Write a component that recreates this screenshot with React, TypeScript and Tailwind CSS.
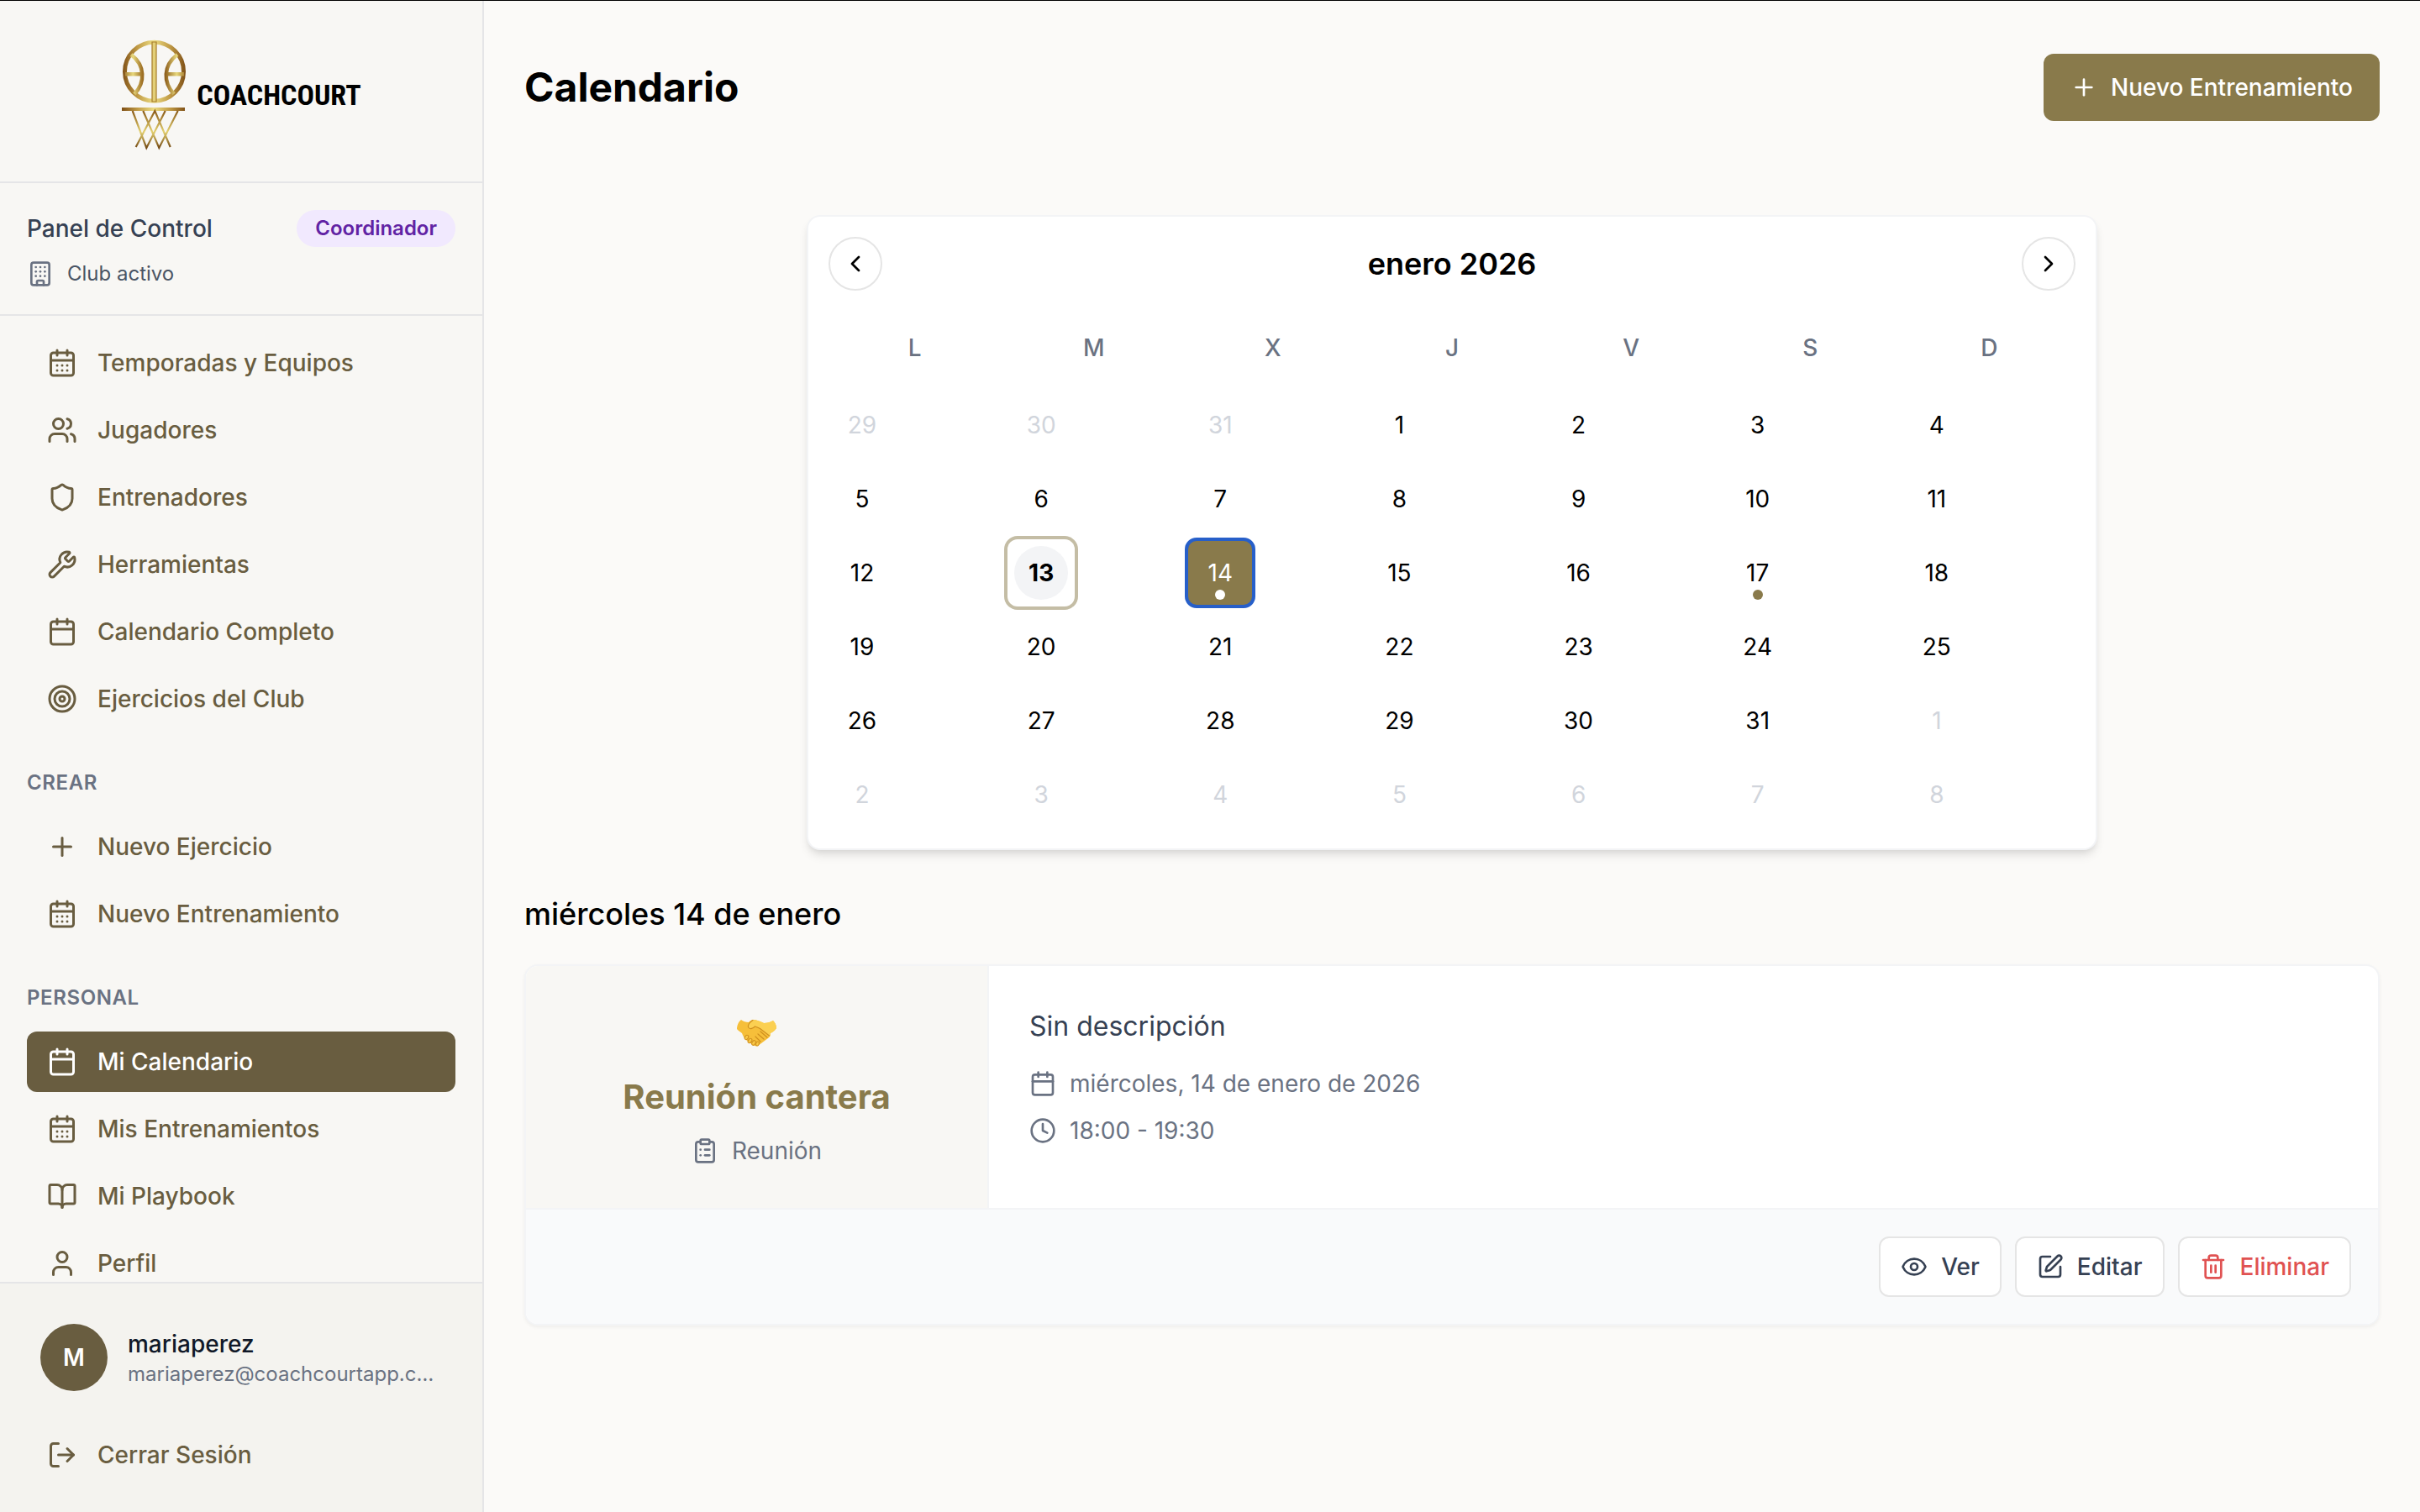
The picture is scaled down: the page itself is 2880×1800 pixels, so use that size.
import React from "react";
import {
  BookOpen,
  Building,
  Calendar,
  CalendarDays,
  ChevronLeft,
  ChevronRight,
  ClipboardList,
  Clock,
  Eye,
  LogOut,
  Plus,
  Shield,
  SquarePen,
  Target,
  Trash2,
  User,
  Users,
  Wrench,
  type LucideIcon,
} from "lucide-react";

type NavItem = { label: string; icon: LucideIcon; active?: boolean };

const clubItems: NavItem[] = [
  { label: "Temporadas y Equipos", icon: CalendarDays },
  { label: "Jugadores", icon: Users },
  { label: "Entrenadores", icon: Shield },
  { label: "Herramientas", icon: Wrench },
  { label: "Calendario Completo", icon: Calendar },
  { label: "Ejercicios del Club", icon: Target },
];

const createItems: NavItem[] = [
  { label: "Nuevo Ejercicio", icon: Plus },
  { label: "Nuevo Entrenamiento", icon: CalendarDays },
];

const personalItems: NavItem[] = [
  { label: "Mi Calendario", icon: Calendar, active: true },
  { label: "Mis Entrenamientos", icon: CalendarDays },
  { label: "Mi Playbook", icon: BookOpen },
  { label: "Perfil", icon: User },
];

const weekdays = ["L", "M", "X", "J", "V", "S", "D"];

// Six weeks, starting on Monday 29 December 2025
const days = Array.from({ length: 42 }, (_, i) => {
  const date = new Date(2025, 11, 29 + i);
  const inMonth = date.getMonth() === 0;
  const day = date.getDate();
  return {
    key: i,
    day,
    inMonth,
    today: inMonth && day === 13,
    selected: inMonth && day === 14,
    hasEvent: inMonth && (day === 14 || day === 17),
  };
});

function Logo() {
  return (
    <a href="#" className="flex items-center gap-3 text-black">
      <svg viewBox="0 0 78 132" className="w-[78px] h-[132px]" fill="none" aria-hidden="true">
        <defs>
          <linearGradient id="gold" x1="0" y1="0" x2="78" y2="0" gradientUnits="userSpaceOnUse">
            <stop offset="0" stopColor="#7a4a12" />
            <stop offset="0.25" stopColor="#c09a45" />
            <stop offset="0.5" stopColor="#ecdc82" />
            <stop offset="0.75" stopColor="#c09a45" />
            <stop offset="1" stopColor="#7a4a12" />
          </linearGradient>
          <linearGradient id="band" x1="0" y1="0" x2="26" y2="0" gradientUnits="userSpaceOnUse" spreadMethod="reflect">
            <stop offset="0" stopColor="#8a5a18" />
            <stop offset="0.55" stopColor="#e8d87c" />
            <stop offset="1" stopColor="#9a6b20" />
          </linearGradient>
          <linearGradient id="net" x1="0" y1="85" x2="0" y2="130" gradientUnits="userSpaceOnUse">
            <stop offset="0" stopColor="#8a5a18" />
            <stop offset="0.55" stopColor="#e3d070" />
            <stop offset="1" stopColor="#6f430f" />
          </linearGradient>
        </defs>
        <circle cx="39.5" cy="38.3" r="35" stroke="url(#gold)" strokeWidth="5" />
        <path d="M37 3v71h5V3z" fill="#e3cf78" stroke="#a67c2a" strokeWidth="1.2" />
        <path d="M12 18C29 31 29 51 16 65M67 18C50 31 50 51 63 65" stroke="url(#band)" strokeWidth="4.5" />
        <path d="M5 41.3h20M54 41.3h21" stroke="url(#band)" strokeWidth="4.5" />
        <path d="M1 83h75" stroke="url(#gold)" strokeWidth="4.2" />
        <path
          d="M13.7 85L30.3 129L52.7 85M26.3 85L45.3 129L67.7 85M17.7 128L40.3 85L58.7 128"
          stroke="url(#net)"
          strokeWidth="2.2"
        />
      </svg>
      <span className="font-['Liberation_Sans_Narrow','Roboto_Condensed','Inter',sans-serif] text-[34px] leading-10 font-bold">
        COACHCOURT
      </span>
    </a>
  );
}

function Handshake() {
  return (
    <svg viewBox="0 0 50 34" className="w-[50px] h-[34px]" role="img" aria-label="Apretón de manos">
      <path
        d="M6 1C3 3 1 8 1 12c1 2 4 3 6 5 1 3 2 5 5 8l8 6c2 1 4 2 6 1l4-3 4-3 4-3c2-1 3-4 3-6 3-2 5-3 7-6 0-4-2-7-4-9-3 2-7 3-11 3-4-2-9-4-13-4-2 0-4 2-5 3-3 0-7-1-9-3z"
        fill="#f6bf3a"
      />
      <path
        d="M44 2c-3 2-7 3-11 3-4-2-9-4-13-4-3 2-6 6-6 9 2 3 6 1 8-1 2 1 5 1 7 3l11 9c1-1 1-3 1-4 3-2 5-3 7-6 0-4-2-7-4-9z"
        fill="#fbd052"
      />
      <g fill="#f9c846" stroke="#cf9020" strokeWidth="1">
        <ellipse cx="12.500" cy="22" rx="2" ry="2.800" transform="rotate(35 12.500 22)" />
        <ellipse cx="16.500" cy="26" rx="2" ry="3" transform="rotate(35 16.500 26)" />
        <ellipse cx="21" cy="28.500" rx="2" ry="3" transform="rotate(30 21 28.500)" />
        <ellipse cx="25.500" cy="29.500" rx="1.800" ry="2.500" transform="rotate(20 25.500 29.500)" />
      </g>
      <path
        d="M20 1.500C16 4 14 7 14.500 10c2 3 6 1 8-1 3 1 6 2 8 4l9 7M29 15l8 7M26 18l7 6M23 21l6 6"
        fill="none"
        stroke="#d0901f"
        strokeWidth="1.200"
        strokeLinecap="round"
      />
    </svg>
  );
}

function NavLink({ label, icon: Icon, active }: NavItem) {
  return (
    <a
      href="#"
      aria-current={active ? "page" : undefined}
      className={`flex items-center gap-6 h-[72px] shrink-0 px-6 rounded-xl text-[28px] leading-10 font-medium ${
        active ? "bg-[#695d40] text-white" : "text-[#695d40]"
      }`}
    >
      <Icon size={36} className="shrink-0" />
      {label}
    </a>
  );
}

function NavSection({ title, items }: { title?: string; items: NavItem[] }) {
  return (
    <div>
      {title && (
        <h3 className="mb-6 text-[24px] leading-8 font-semibold tracking-wide uppercase text-gray-500">{title}</h3>
      )}
      <div className="flex flex-col gap-2">
        {items.map((item) => (
          <NavLink key={item.label} {...item} />
        ))}
      </div>
    </div>
  );
}

function Sidebar() {
  return (
    <aside className="flex flex-col w-[576px] shrink-0 bg-[#f8f7f4] border-r-2 border-[#e5e5e7]">
      {/* Logo */}
      <div className="flex items-center justify-center h-[217px] shrink-0 pt-2 border-b-2 border-[#e5e5e7]">
        <Logo />
      </div>

      {/* Role */}
      <div className="shrink-0 px-8 pt-8 pb-7 border-b-2 border-[#e5e5e7]">
        <div className="flex items-center justify-between">
          <span className="text-[28px] leading-10 font-medium text-gray-700">Panel de Control</span>
          <span className="px-[22px] py-1.5 rounded-full bg-[#f1e9fe] text-[24px] leading-8 font-semibold text-[#6123a4]">
            Coordinador
          </span>
        </div>
        <div className="flex items-center gap-4 mt-3 text-[24px] leading-10 text-gray-600">
          <Building size={32} className="text-gray-500" />
          Club activo
        </div>
      </div>

      {/* Navigation */}
      <nav className="flex flex-col flex-1 min-h-0 gap-12 px-8 pt-5 overflow-hidden">
        <NavSection items={clubItems} />
        <NavSection title="Crear" items={createItems} />
        <NavSection title="Personal" items={personalItems} />
      </nav>

      {/* Account */}
      <div className="shrink-0 p-8 bg-[#f4f3ef] border-t-2 border-[#e5e5e7]">
        <div className="flex items-center gap-6 p-4 mb-6">
          <div className="flex items-center justify-center size-20 shrink-0 rounded-full bg-[#695d40] text-[28px] font-semibold text-white">
            M
          </div>
          <div className="whitespace-nowrap">
            <p className="text-[28px] leading-10 font-medium text-gray-900">mariaperez</p>
            <p className="text-[24px] leading-8 text-gray-500">mariaperez@coachcourtapp.c…</p>
          </div>
        </div>
        <NavLink label="Cerrar Sesión" icon={LogOut} />
      </div>
    </aside>
  );
}

function MonthCalendar() {
  return (
    <section className="w-full max-w-[1536px] mx-auto p-6 bg-white border-2 border-gray-100 rounded-2xl shadow-[0_8px_12px_-2px_rgba(0,0,0,0.1),0_4px_8px_-4px_rgba(0,0,0,0.1)]">
      <div className="flex items-center justify-between">
        <button
          type="button"
          aria-label="Mes anterior"
          className="flex items-center justify-center size-16 rounded-full border-2 border-[#e5e5e5] text-black"
        >
          <ChevronLeft size={32} />
        </button>
        <h2 className="text-[36px] leading-[56px] font-semibold text-black">enero 2026</h2>
        <button
          type="button"
          aria-label="Mes siguiente"
          className="flex items-center justify-center size-16 rounded-full border-2 border-[#e5e5e5] text-black"
        >
          <ChevronRight size={32} />
        </button>
      </div>

      <div className="grid grid-cols-7 gap-2 mt-6 text-[28px] leading-10">
        {weekdays.map((name) => (
          <div key={name} className="flex items-center justify-center h-[88px] font-medium text-gray-500">
            {name}
          </div>
        ))}
        {days.map(({ key, day, inMonth, today, selected, hasEvent }) => (
          <button
            key={key}
            type="button"
            className={`relative flex items-center justify-center size-20 rounded-xl ${
              selected
                ? "bg-[#897a4b] text-white outline-4 -outline-offset-2 outline-[#275fc9]"
                : today
                  ? "text-black font-bold ring-4 ring-[#c4bda5]"
                  : inMonth
                    ? "text-black"
                    : "text-gray-300"
            }`}
          >
            <span className={today ? "flex items-center justify-center size-16 rounded-full bg-gray-100" : ""}>
              {day}
            </span>
            {hasEvent && (
              <span
                className={`absolute bottom-2 left-1/2 size-3 -translate-x-1/2 rounded-full ${
                  selected ? "bg-white" : "bg-[#897a4b]"
                }`}
              />
            )}
          </button>
        ))}
      </div>
    </section>
  );
}

function ActionButton({ label, icon: Icon, danger }: { label: string; icon: LucideIcon; danger?: boolean }) {
  return (
    <button
      type="button"
      className={`flex items-center gap-4 h-[72px] px-6 rounded-xl border-2 border-[#e5e5e5] bg-white text-[28px] leading-10 font-medium ${
        danger ? "text-[#e05252]" : "text-gray-700"
      }`}
    >
      <Icon size={32} />
      {label}
    </button>
  );
}

function EventCard() {
  return (
    <article className="overflow-hidden mt-8 bg-white border-2 border-gray-100 rounded-2xl shadow-[0_2px_4px_rgba(0,0,0,0.05)]">
      <div className="flex">
        <div className="flex flex-col items-center w-1/4 py-12 bg-[#f8f7f4] border-r-2 border-gray-100">
          <div className="flex items-center justify-center h-16">
            <Handshake />
          </div>
          <h3 className="mt-4 text-[40px] leading-[56px] font-bold text-[#897a4b]">Reunión cantera</h3>
          <p className="flex items-center gap-4 mt-4 text-[28px] leading-10 text-gray-500">
            <ClipboardList size={32} />
            Reunión
          </p>
        </div>
        <div className="flex-1 p-12">
          <p className="text-[32px] leading-[48px] text-gray-700">Sin descripción</p>
          <div className="flex flex-col gap-4 mt-6 text-[28px] leading-10 text-gray-500">
            <p className="flex items-center gap-4">
              <Calendar size={32} />
              miércoles, 14 de enero de 2026
            </p>
            <p className="flex items-center gap-4">
              <Clock size={32} />
              18:00 - 19:30
            </p>
          </div>
        </div>
      </div>

      {/* Actions */}
      <div className="flex justify-end gap-4 p-8 bg-[#f9fafb] border-t-2 border-gray-100">
        <ActionButton label="Ver" icon={Eye} />
        <ActionButton label="Editar" icon={SquarePen} />
        <ActionButton label="Eliminar" icon={Trash2} danger />
      </div>
    </article>
  );
}

export default function App() {
  return (
    <div className="flex h-screen border-t border-black bg-[#fbfaf8] font-['Inter',sans-serif]">
      <Sidebar />
      <main className="flex-1 min-w-0 overflow-hidden px-12 pt-[63px]">
        <header className="flex items-center justify-between mb-28">
          <h1 className="text-[48px] leading-[64px] font-bold text-black">Calendario</h1>
          <button
            type="button"
            className="flex items-center gap-4 h-20 px-8 rounded-xl bg-[#897a4b] text-[28px] leading-10 font-medium text-white"
          >
            <Plus size={32} />
            Nuevo Entrenamiento
          </button>
        </header>

        <MonthCalendar />

        <h2 className="mt-12 text-[36px] leading-[56px] font-medium text-black">miércoles 14 de enero</h2>
        <EventCard />
      </main>
    </div>
  );
}
